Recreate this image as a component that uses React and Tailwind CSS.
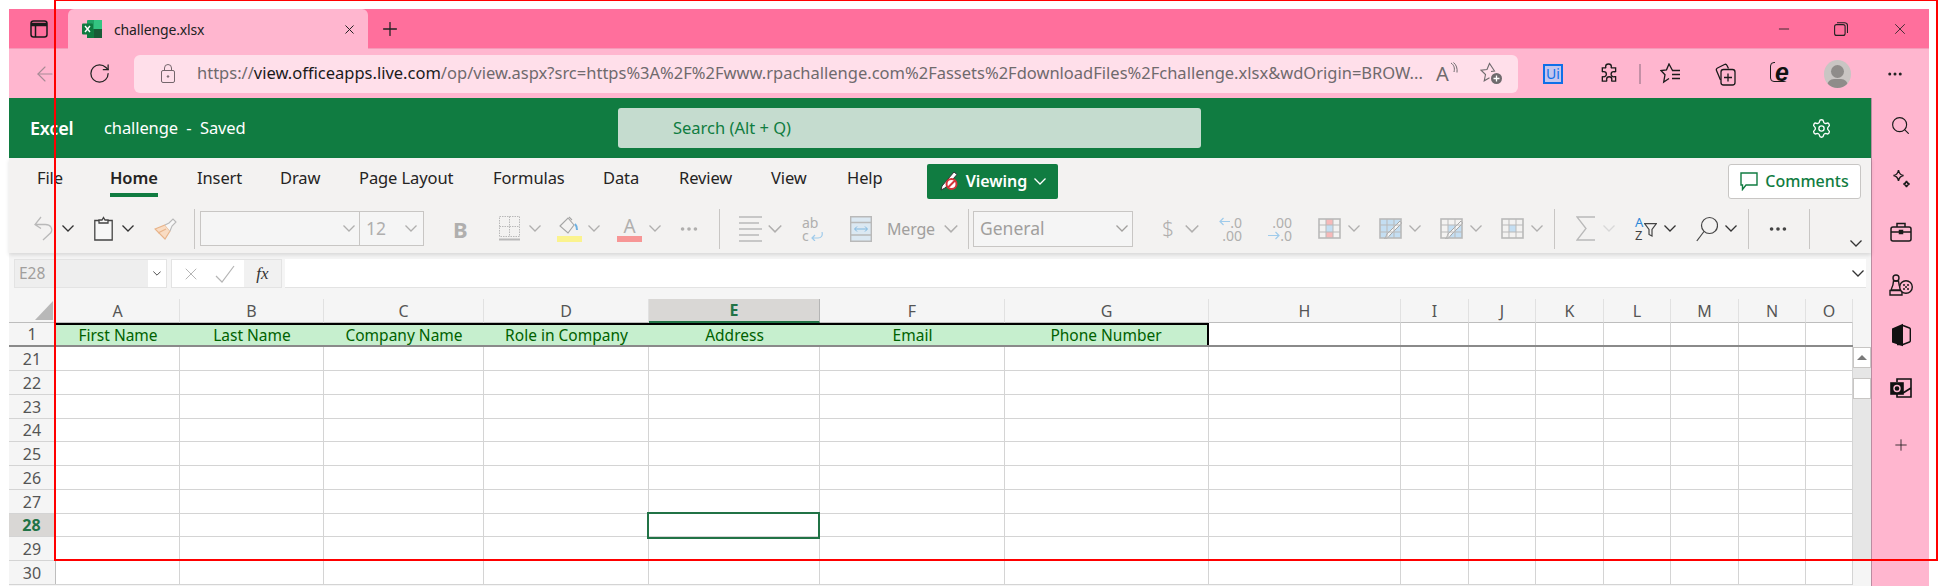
import { Search, Plus, X, Minus, ArrowLeft, RotateCw, Settings, MoreHorizontal } from "lucide-react";

const columns = ["A", "B", "C", "D", "E", "F", "G", "H", "I", "J", "K", "L", "M", "N", "O"];
const gridCols = "grid leading-[20px] grid-rows-[minmax(0,1fr)] grid-cols-[47px_124px_144px_160px_165px_171px_185px_204px_192px_68px_67px_68px_67px_68px_67px_47px]";
const titles = ["First Name", "Last Name", "Company Name", "Role in Company", "Address", "Email", "Phone Number"];
const rows = [
    ["21", "h-[24px]"],
    ["22", "h-[24px]"],
    ["23", "h-[24px]"],
    ["24", "h-[23px]"],
    ["25", "h-[24px]"],
    ["26", "h-[24px]"],
    ["27", "h-[24px]"],
    ["28", "h-[23px]"],
    ["29", "h-[24px]"],
    ["30", "h-[24px]"],
];
const tabs = [
    ["File", "w-[73px] ml-[28px]"],
    ["Home", "w-[87px]"],
    ["Insert", "w-[83px]"],
    ["Draw", "w-[79px]"],
    ["Page Layout", "w-[134px]"],
    ["Formulas", "w-[110px]"],
    ["Data", "w-[76px]"],
    ["Review", "w-[92px]"],
    ["View", "w-[76px]"],
    ["Help", "w-[80px]"],
];

function Chev({ c = "", size = "w-[12px] h-[7px]" }) {
    return (
        <svg viewBox="0 0 12 7" className={"shrink-0 " + size + " " + c} fill="none" stroke="currentColor" strokeWidth="1.3">
            <path d="M0.5 0.5 6 6l5.500-5.500" />
        </svg>
    );
}

function Sep({ c = "" }) {
    return <div className={"w-px h-[40px] bg-[#c8c6c4] shrink-0 " + c}></div>;
}

function GridIcon({ c = "", children }) {
    return (
        <svg viewBox="0 0 23 21" className={"w-[23px] h-[21px] shrink-0 " + c} fill="none" stroke="#b9b9b9">
            {children}
            <path d="M8 1v19M15 1v19M1 7h21M1 14h21" strokeWidth="1" />
            <rect x="1" y="1" width="21" height="19" strokeWidth="1.600" />
        </svg>
    );
}

export default function App() {
    return (
        <div className="relative w-[1938px] h-[586px] overflow-hidden bg-white pt-[9px] pl-[9px] font-['Noto_Sans',sans-serif]">
            {/* title bar */}
            <div className="flex items-start w-[1920px] h-[40px] bg-[#ff6f9c] border-b border-[#f59ab8]">
                <div className="w-[59px] h-[39px] flex items-center pl-[21px] shrink-0">
                    <svg viewBox="0 0 18 18" className="w-[18px] h-[18px]" fill="none" stroke="#1a1a1a" strokeWidth="1.5">
                        <rect x="1" y="1" width="16" height="16" rx="2.500" />
                        <path d="M1 4.500h16" strokeWidth="3.500" />
                        <path d="M5.500 5v12" />
                    </svg>
                </div>
                <div className="flex items-center w-[300px] h-[40px] bg-[#ffb6cf] rounded-t-[6px] pl-[14px] shrink-0">
                    <svg viewBox="0 0 20 18" className="w-[20px] h-[18px] shrink-0">
                        <rect x="5" y="0" width="15" height="18" rx="1" fill="#21a366" />
                        <rect x="12" y="0" width="8" height="9" fill="#33c481" />
                        <rect x="5" y="9" width="8" height="9" fill="#107c41" />
                        <rect x="12" y="9" width="8" height="9" fill="#185c37" />
                        <rect x="0" y="3.500" width="11" height="11" rx="1" fill="#0f7b40" />
                        <path d="M3 6l5 6M8 6l-5 6" stroke="#fff" strokeWidth="1.400" />
                    </svg>
                    <span className="ml-[12px] text-[14px] text-[#222] w-[228px] tracking-[-0.15px]">challenge.xlsx</span>
                    <X className="w-[15px] h-[15px] text-[#222] shrink-0" strokeWidth={1.6} />
                </div>
                <div className="h-[39px] flex items-center ml-[11px]">
                    <Plus className="w-[22px] h-[22px] text-[#222]" strokeWidth={1.4} />
                </div>
                <div className="flex items-center h-[39px] ml-auto pr-[20px]">
                    <Minus className="w-[16px] h-[16px] text-[#222]" strokeWidth={1.3} />
                    <svg viewBox="0 0 14 14" className="w-[14px] h-[14px] ml-[42px]" fill="none" stroke="#222" strokeWidth="1.100">
                        <rect x="0.600" y="2.600" width="10.500" height="10.800" rx="2" />
                        <path d="M3 .7h7.500a3 3 0 0 1 3 3V11" />
                    </svg>
                    <X className="w-[18px] h-[18px] ml-[43px] text-[#222]" strokeWidth={1.1} />
                </div>
            </div>

            {/* address bar */}
            <div className="flex items-center w-[1920px] h-[49px] bg-[#ffb6cf]">
                <ArrowLeft className="w-[24px] h-[24px] ml-[24px] text-[#a78a95] shrink-0" strokeWidth={1.1} />
                <RotateCw className="w-[23px] h-[23px] ml-[31px] text-[#222] shrink-0" strokeWidth={1.3} />
                <div className="flex items-center w-[1384px] h-[38px] ml-[23px] rounded-[6px] bg-[#ffdfea] shrink-0">
                    <svg viewBox="0 0 14 19" className="w-[14px] h-[19px] ml-[27px] shrink-0" fill="none" stroke="#75666c" strokeWidth="1">
                        <rect x="0.500" y="6.500" width="13" height="12" rx="1.500" />
                        <path d="M3.500 6.500V4a3.500 3.500 0 0 1 7 0v2.500" />
                        <circle cx="7" cy="12.500" r="0.800" fill="#75666c" />
                    </svg>
                    <p className="ml-[22px] w-[1230px] text-[16.500px] text-[#6f6a6d] whitespace-nowrap overflow-hidden shrink-0">
                        https://<span className="text-[#1a1a1a]">view.officeapps.live.com</span>/op/view.aspx?src=https%3A%2F%2Fwww.rpachallenge.com%2Fassets%2FdownloadFiles%2Fchallenge.xlsx&amp;wdOrigin=BROW...
                    </p>
                    <div className="relative ml-[9px] w-[20px] text-[#6f6a6d] text-[20px] leading-none shrink-0">
                        A
                        <svg viewBox="0 0 8 12" className="absolute -right-[2px] -top-[2px] w-[8px] h-[12px]" fill="none" stroke="#6f6a6d" strokeWidth="1">
                            <path d="M1 1c3 2 4 5 3 9M3.500.5c3 2.500 4 6 3.500 10" />
                        </svg>
                    </div>
                    <svg viewBox="0 0 23 23" className="w-[23px] h-[23px] ml-[24px] shrink-0" fill="none" stroke="#6f6a6d" strokeWidth="1.100">
                        <path d="M11 9.500l3.500-.5L9.500 1.500 7 7.500l-6 .7 4.500 4.300-1.300 6.300 5.300-3" />
                        <circle cx="16.500" cy="16.500" r="5.500" fill="#6f6a6d" stroke="none" />
                        <path d="M16.500 13.500v6M13.500 16.500h6" stroke="#fff" strokeWidth="1.300" />
                    </svg>
                </div>
                <div className="ml-[25px] w-[20px] h-[20px] flex items-center justify-center border-2 border-[#0f6fe8] bg-[#c3c6ee] text-[#0f6fe8] text-[14px] leading-none shrink-0">Ui</div>
                <svg viewBox="0 0 20 22" className="w-[19px] h-[21px] ml-[36px] shrink-0" fill="none" stroke="#1a1a1a" strokeWidth="1.400">
                    <path d="M7 3.500a3 2.500 0 0 1 6 0c0 1-.5 1 0 1.500h4.500v4c-.5.500-1 0-2 0a2.500 2.500 0 0 0 0 5.500c1 0 1.500-.5 2-.2V19h-4c-.5-.5 0-1 0-1.800a2.500 2.500 0 0 0-5.500 0c0 .8.500 1.300 0 1.800H3.500v-4.500c.5-.5 1 0 1.500 0a2.500 2.500 0 0 0 0-5.500c-.5 0-1 .5-1.500 0V5H7c.5-.5 0-.5 0-1.500z" />
                </svg>
                <div className="w-[2px] h-[20px] ml-[21px] bg-[#c490a6] shrink-0"></div>
                <svg viewBox="0 0 21 21" className="w-[21px] h-[21px] ml-[19px] shrink-0" fill="none" stroke="#1a1a1a" strokeWidth="1.300">
                    <path d="M12.500 7.500L9 1 6.500 6.800 1 7.500l4 4.200-1.300 7.300 5.300-3.500" />
                    <path d="M12 7.500h8M12 11.500h8M12 15.500h8" />
                </svg>
                <svg viewBox="0 0 21 24" className="w-[21px] h-[24px] ml-[34px] shrink-0" fill="none" stroke="#1a1a1a" strokeWidth="1.300">
                    <path d="M5.500 18L1.500 8.500c-.5-1.200 0-2 1-2.500l7-3.500c1-.5 2 0 2.500 1l1.500 3" />
                    <rect x="6" y="7.500" width="14" height="15.500" rx="2.500" />
                    <path d="M13 11.500v8M9 15.500h8" />
                </svg>
                <div className="relative w-[20px] h-[24px] ml-[34px] shrink-0">
                    <div className="absolute left-0 top-0 w-[18px] h-[20px] rounded-[4px] border border-[#1a1a1a]"></div>
                    <span className="absolute left-[5px] top-[-1px] bg-[#ffb6cf] font-['Liberation_Sans',sans-serif] font-bold italic text-[25px] leading-[23px] h-[20px] text-[#111]">e</span>
                </div>
                <div className="relative w-[27px] h-[28px] ml-[34px] rounded-full bg-[#c9c5c3] overflow-hidden shrink-0">
                    <div className="absolute left-[7px] top-[5px] w-[13px] h-[13px] rounded-full bg-[#8f8c8a]"></div>
                    <div className="absolute left-[3px] top-[19px] w-[21px] h-[14px] rounded-full bg-[#8f8c8a]"></div>
                </div>
                <MoreHorizontal className="w-[18px] h-[18px] ml-[35px] text-[#222] shrink-0" strokeWidth={2} />
            </div>

            <div className="flex w-[1920px] h-[488px]">
                <div className="flex flex-col w-[1862px] shrink-0 bg-[#f5f5f5]">
                    {/* app header */}
                    <div className="flex items-center h-[60px] shrink-0 bg-[#107c41] text-white">
                        <span className="ml-[21px] w-[74px] text-[18px] font-semibold tracking-[-0.2px]">Excel</span>
                        <span className="text-[16.500px] w-[514px] whitespace-pre tracking-[-0.1px]">challenge  -  Saved</span>
                        <div className="flex items-center w-[583px] h-[40px] rounded-[3px] bg-[#c5dccf] pl-[55px] text-[16.500px] text-[#107c41]">Search (Alt + Q)</div>
                        <Settings className="w-[21px] h-[21px] ml-[610px]" strokeWidth={1.5} />
                    </div>

                    {/* ribbon */}
                    <div className="h-[95px] shrink-0 bg-[#f3f2f1] shadow-[0_2px_4px_rgba(0,0,0,0.12)] z-10">
                        <div className="flex items-center h-[46px]">
                            {tabs.map(([label, width]) => (
                                <div key={label} className={"h-[46px] pb-[5px] flex items-center text-[16.500px] text-[#252423] tracking-[-0.1px] shrink-0 " + width}>
                                    <span className={label === "Home" ? "relative font-semibold" : ""}>
                                        {label}
                                        {label === "Home" && <span className="absolute left-0 right-0 top-[27px] h-[4px] bg-[#107c41]"></span>}
                                    </span>
                                </div>
                            ))}
                            <div className="flex items-center justify-center gap-[7px] w-[131px] h-[35px] rounded-[2px] bg-[#107c41] text-white text-[16px] font-semibold shrink-0">
                                <svg viewBox="0 0 20 20" className="w-[20px] h-[20px] shrink-0">
                                    <path d="M15 1l3 2.500L6 17l-4 2 1-4z" fill="#fff" stroke="#333" strokeWidth="1" />
                                    <circle cx="12.500" cy="13" r="5" fill="#fff" stroke="#d13438" strokeWidth="2" />
                                    <path d="M9 16.500l7-7" stroke="#d13438" strokeWidth="2" />
                                </svg>
                                Viewing
                                <Chev c="text-white" />
                            </div>
                            <div className="flex items-center justify-center gap-[7px] w-[133px] h-[35px] ml-[670px] rounded-[3px] bg-white border border-[#c8c6c4] text-[#107c41] text-[16px] font-medium shrink-0">
                                <svg viewBox="0 0 18 19" className="w-[18px] h-[19px]" fill="none" stroke="#107c41" strokeWidth="1.400">
                                    <path d="M1 1h16v12H6l-3.500 4.500V13H1z" />
                                </svg>
                                Comments
                            </div>
                        </div>

                        <div className="flex items-center h-[49px] text-[#b0afae]">
                            {/* undo, clipboard, painter */}
                            <svg viewBox="0 0 20 25" className="w-[20px] h-[25px] ml-[25px] shrink-0" fill="none" stroke="#b9b9b9" strokeWidth="1.300">
                                <path d="M7 1L1 8.500l6 4M1 8.500h10.500c5 0 7.500 4 5.500 8L9 24" />
                            </svg>
                            <Chev c="ml-[8px] text-[#333]" />
                            <svg viewBox="0 0 19 25" className="w-[19px] h-[25px] ml-[20px] shrink-0" fill="#f7f7f7" stroke="#444" strokeWidth="1.300">
                                <path d="M5 4.500H.8v19.500h17.400V4.500H14" />
                                <path d="M5 7V4h3L9.500 1.500 11 4h3v3z" />
                            </svg>
                            <Chev c="ml-[9px] text-[#333]" />
                            <svg viewBox="0 0 23 24" className="w-[23px] h-[24px] ml-[20px] shrink-0" fill="none" strokeWidth="1.100">
                                <path d="M1 12l10-4 5 6-5 8z" fill="#f9dcc3" stroke="#e8b48a" />
                                <path d="M4 16l8-4" stroke="#e8b48a" />
                                <path d="M11 8l4-2 4-4 3 3-4 4-2 5" stroke="#b9b9b9" fill="#f7f7f7" />
                            </svg>
                            <Sep c="ml-[17px]" />

                            {/* font */}
                            <div className="flex items-center justify-end w-[160px] h-[35px] ml-[5px] pr-[4px] bg-[#f5f5f5] border border-[#c8c6c4] shrink-0">
                                <Chev c="text-[#b0afae]" />
                            </div>
                            <div className="flex items-center justify-between w-[64px] h-[35px] px-[6px] bg-[#f5f5f5] border border-l-0 border-[#c8c6c4] text-[17.500px] shrink-0">
                                12
                                <Chev />
                            </div>
                            <span className="ml-[29px] w-[14px] text-[22px] leading-none font-bold shrink-0">B</span>
                            <svg viewBox="0 0 21 25" className="w-[21px] h-[25px] ml-[32px] shrink-0" fill="none" stroke="#b9b9b9" strokeWidth="1" strokeDasharray="1.500 1">
                                <path d="M.5.5h20v20H.5zM10.500.5v20M.5 10.500h20" />
                                <path d="M0 23.500h21" strokeWidth="2" strokeDasharray="none" />
                            </svg>
                            <Chev c="ml-[9px]" />
                            <div className="flex flex-col items-center w-[25px] ml-[16px] shrink-0">
                                <svg viewBox="0 0 25 20" className="w-[25px] h-[20px]" fill="none" strokeWidth="1.100">
                                    <path d="M3 10l8-8 6 7-6 8z" stroke="#a5a5a5" />
                                    <path d="M12 1l3 3" stroke="#a5a5a5" />
                                    <path d="M18 8c2 2 2 5 2 6" stroke="#6fb0e0" strokeWidth="2" />
                                </svg>
                                <div className="w-[25px] h-[6px] bg-[#fbf38e]"></div>
                            </div>
                            <Chev c="ml-[6px]" />
                            <div className="flex flex-col items-center w-[25px] ml-[17px] shrink-0">
                                <span className="text-[19px] leading-[20px]">A</span>
                                <div className="w-[25px] h-[6px] bg-[#f79696]"></div>
                            </div>
                            <Chev c="ml-[7px]" />
                            <MoreHorizontal className="w-[22px] h-[22px] ml-[17px] shrink-0" strokeWidth={2} />
                            <Sep c="ml-[19px]" />

                            {/* alignment */}
                            <svg viewBox="0 0 23 26" className="w-[23px] h-[26px] ml-[19px] shrink-0" stroke="#b9b9b9" strokeWidth="1.400">
                                <path d="M0 1h23M0 7h20M0 13h23M0 19h20M0 25h23" />
                            </svg>
                            <Chev c="ml-[6px]" size="w-[14px] h-[8px]" />
                            <div className="relative w-[21px] h-[26px] ml-[20px] text-[14px] leading-[13px] shrink-0">
                                <div>ab</div>
                                <div>c</div>
                                <svg viewBox="0 0 12 9" className="absolute right-0 bottom-[1px] w-[12px] h-[9px]" fill="none" stroke="#9fcbeb" strokeWidth="1.200">
                                    <path d="M11 0c1 4-1 6-4 6H1M4 3L1 6l3 3" />
                                </svg>
                            </div>
                            <svg viewBox="0 0 22 26" className="w-[22px] h-[26px] ml-[27px] shrink-0" fill="#dbe8f2" stroke="#b9b9b9" strokeWidth="1.400">
                                <path d="M.7.7h20.600v24.600H.7zM.7 6.500h20.600M.7 19h20.600" />
                                <path d="M5 13h12M7 10.500L4.500 13 7 15.500M15 10.500l2.500 2.500-2.500 2.500" fill="none" stroke="#7db7e0" strokeWidth="1" />
                            </svg>
                            <span className="ml-[15px] w-[49px] text-[16px] text-[#a19f9d] tracking-[-0.2px] shrink-0">Merge</span>
                            <Chev c="ml-[8px]" size="w-[14px] h-[8px]" />
                            <Sep c="ml-[10px]" />

                            {/* number */}
                            <div className="flex items-center justify-between w-[160px] h-[36px] ml-[4px] pl-[6px] pr-[4px] bg-[#f5f5f5] border border-[#c8c6c4] text-[17.500px] text-[#a19f9d] shrink-0">
                                General
                                <Chev />
                            </div>
                            <span className="ml-[29px] w-[11px] text-[21px] leading-none font-light shrink-0">$</span>
                            <Chev c="ml-[12px]" size="w-[14px] h-[8px]" />
                            <div className="relative w-[23px] h-[26px] ml-[20px] text-[14px] leading-[13px] text-right shrink-0">
                                <div>.0</div>
                                <div>.00</div>
                                <svg viewBox="0 0 11 9" className="absolute left-0 top-[1px] w-[11px] h-[9px]" fill="none" stroke="#9fcbeb" strokeWidth="1.200">
                                    <path d="M11 4.500H1M4.500 1L1 4.500 4.500 8" />
                                </svg>
                            </div>
                            <div className="relative w-[24px] h-[26px] ml-[26px] text-[14px] leading-[13px] text-right shrink-0">
                                <div>.00</div>
                                <div>.0</div>
                                <svg viewBox="0 0 12 9" className="absolute left-0 bottom-[2px] w-[12px] h-[9px]" fill="none" stroke="#9fcbeb" strokeWidth="1.200">
                                    <path d="M0 4.500h11M7.500 1L11 4.500 7.500 8" />
                                </svg>
                            </div>

                            {/* styles */}
                            <GridIcon c="ml-[26px]">
                                <rect x="8" y="1" width="7" height="6" fill="#f7b9b9" stroke="none" />
                                <rect x="8" y="7" width="7" height="7" fill="#c4def2" stroke="none" />
                                <rect x="8" y="14" width="7" height="6" fill="#f7b9b9" stroke="none" />
                            </GridIcon>
                            <Chev c="ml-[7px]" />
                            <GridIcon c="ml-[19px]">
                                <rect x="1" y="1" width="21" height="19" fill="#c4def2" stroke="none" />
                                <path d="M23 5L11 17c-1 2-3 4-6 4 2-1 2-3 3-5L21 3z" fill="#f5f5f5" stroke="#a5a5a5" />
                            </GridIcon>
                            <Chev c="ml-[7px]" />
                            <GridIcon c="ml-[19px]">
                                <rect x="8" y="7" width="14" height="13" fill="#c4def2" stroke="none" />
                                <path d="M23 5L11 17c-1 2-3 4-6 4 2-1 2-3 3-5L21 3z" fill="#f5f5f5" stroke="#a5a5a5" />
                            </GridIcon>
                            <Chev c="ml-[7px]" />
                            <GridIcon c="ml-[19px]">
                                <rect x="8" y="7" width="7" height="7" fill="#c4def2" stroke="none" />
                            </GridIcon>
                            <Chev c="ml-[7px]" />
                            <Sep c="ml-[11px]" />

                            {/* editing */}
                            <svg viewBox="0 0 19 25" className="w-[19px] h-[25px] ml-[21px] shrink-0" fill="none" stroke="#b9b9b9" strokeWidth="1.300">
                                <path d="M19 1H1l9 11.500L1 24h18" />
                            </svg>
                            <Chev c="ml-[8px] text-[#d8d8d8]" />
                            <div className="relative w-[22px] h-[26px] ml-[20px] text-[13px] leading-[13px] shrink-0">
                                <div className="text-[#2b88d8]">A</div>
                                <div className="text-[#444]">Z</div>
                                <svg viewBox="0 0 13 14" className="absolute right-0 top-[7px] w-[13px] h-[14px]" fill="none" stroke="#444" strokeWidth="1.200">
                                    <path d="M.6.6h11.800L8 6.500V13L5 11.500v-5z" />
                                </svg>
                            </div>
                            <Chev c="ml-[7px] text-[#333]" />
                            <svg viewBox="0 0 22 26" className="w-[22px] h-[26px] ml-[20px] shrink-0" fill="none" stroke="#444" strokeWidth="1.200">
                                <circle cx="13.500" cy="9.500" r="8" />
                                <path d="M8 15.500L.8 25" />
                            </svg>
                            <Chev c="ml-[7px] text-[#333]" />
                            <Sep c="ml-[11px]" />
                            <MoreHorizontal className="w-[22px] h-[22px] ml-[18px] text-[#444] shrink-0" strokeWidth={2} />
                            <Sep c="ml-[20px]" />
                            <Chev c="ml-[40px] mt-[30px] text-[#333]" />
                        </div>
                    </div>

                    {/* formula bar */}
                    <div className="flex items-center h-[29px] mt-[6px] shrink-0">
                        <div className="flex items-center w-[153px] h-[29px] ml-[5px] bg-[#eeeeee] border border-[#e3e3e3] shrink-0">
                            <span className="w-[133px] pl-[4px] text-[15.500px] text-[#a19f9d]">E28</span>
                            <div className="flex items-center justify-center w-[18px] h-[27px] bg-white">
                                <Chev c="text-[#333]" size="w-[8px] h-[5px]" />
                            </div>
                        </div>
                        <div className="flex items-center w-[111px] h-[29px] ml-[4px] bg-white border border-[#e3e3e3] shrink-0">
                            <X className="w-[20px] h-[20px] ml-[9px] text-[#b5b5b5]" strokeWidth={1.2} />
                            <svg viewBox="0 0 20 18" className="w-[20px] h-[18px] ml-[14px]" fill="none" stroke="#b5b5b5" strokeWidth="1.200">
                                <path d="M1 11l6 6L19 1" />
                            </svg>
                            <div className="w-[37px] h-[27px] ml-[9px] flex items-center justify-center bg-[#f1f1f1] font-['Liberation_Serif',serif] italic text-[17px] text-[#333]">fx</div>
                        </div>
                        <div className="flex items-center justify-end w-[1581px] h-[29px] ml-[3px] pr-[2px] bg-white border-b border-[#e3e3e3] shrink-0">
                            <Chev c="text-[#333]" />
                        </div>
                    </div>

                    {/* sheet */}
                    <div className="flex mt-[11px]">
                        <div className="w-[1844px] shrink-0">
                            <div className={gridCols + " h-[24px]"}>
                                <div className="relative border-b border-[#bdbdbd]">
                                    <svg viewBox="0 0 18 19" className="absolute right-[3px] bottom-[2px] w-[18px] h-[19px]">
                                        <path d="M18 0v19H0z" fill="#b8b8b8" />
                                    </svg>
                                </div>
                                {columns.map((col) =>
                                    col === "E" ? (
                                        <div key={col} className="flex items-center justify-center bg-[#d9d7d5] border-b-2 border-r border-b-[#217346] border-r-[#b5b5b5] text-[16px] font-bold text-[#217346]">{col}</div>
                                    ) : (
                                        <div key={col} className="flex items-center justify-center border-r border-b border-r-[#e1e1e1] border-b-[#bdbdbd] text-[16px] text-[#555]">{col}</div>
                                    )
                                )}
                            </div>
                            <div className={gridCols + " h-[24px] border-b-2 border-[#8a8a8a]"}>
                                <div className="flex items-center justify-center text-[16px] text-[#555] border-r border-[#bdbdbd]">1</div>
                                {columns.map((col, i) =>
                                    i < 7 ? (
                                        <div key={col} className={"flex items-center justify-center bg-[#c6efce] border-t-2 border-black text-[15.500px] text-[#006100] " + (i === 6 ? "border-r-2" : "")}>{titles[i]}</div>
                                    ) : (
                                        <div key={col} className="bg-white border-r border-[#d4d4d4]"></div>
                                    )
                                )}
                            </div>
                            {rows.map(([num, height]) => (
                                <div key={num} className={gridCols + " border-b border-[#d4d4d4] " + height}>
                                    {num === "28" ? (
                                        <div className="flex items-center justify-center bg-[#d9d7d5] border-r-2 border-[#217346] text-[16px] font-bold text-[#217346]">{num}</div>
                                    ) : (
                                        <div className="flex items-center justify-center text-[16px] text-[#555] border-r border-[#bdbdbd]">{num}</div>
                                    )}
                                    {columns.map((col) => (
                                        <div key={col} className="relative bg-white border-r border-[#d4d4d4]">
                                            {num === "28" && col === "E" && (
                                                <div className="absolute -left-[2px] -top-[2px] -right-[1px] -bottom-[3px] z-10 border-2 border-[#217346]"></div>
                                            )}
                                        </div>
                                    ))}
                                </div>
                            ))}
                        </div>
                        <div className="flex flex-col w-[18px] shrink-0">
                            <div className="h-[48px] shrink-0"></div>
                            <div className="h-[214px] bg-[#e6e6e6]">
                                <div className="flex items-center justify-center h-[21px] bg-white border border-[#c8c6c4]">
                                    <div className="w-0 h-0 border-x-[5px] border-b-[5px] border-x-transparent border-b-[#7a7a7a]"></div>
                                </div>
                                <div className="h-[21px] mt-[10px] bg-white border border-[#c8c6c4]"></div>
                            </div>
                        </div>
                    </div>
                </div>

                {/* edge sidebar */}
                <div className="flex flex-col items-center w-[58px] shrink-0 bg-[#ffb6cf] border-l border-[#b98da1] text-[#1a1a1a]">
                    <div className="h-[54px] flex items-center">
                        <Search className="w-[21px] h-[21px]" strokeWidth={1.3} />
                    </div>
                    <div className="h-[53px] flex items-center">
                        <svg viewBox="0 0 20 20" className="w-[20px] h-[20px]" fill="none" stroke="#1a1a1a" strokeWidth="1.400">
                            <path d="M7.500 1c.5 3 2 5 5 5.500-3 .5-4.500 2.500-5 5.500-.5-3-2-5-5-5.500 3-.5 4.500-2.500 5-5.500zM15.500 12c.3 1.500 1 2.500 3 3-2 .5-2.700 1.500-3 3-.3-1.500-1-2.500-3-3 2-.5 2.700-1.500 3-3z" />
                        </svg>
                    </div>
                    <div className="h-[53px] flex items-center">
                        <svg viewBox="0 0 22 20" className="w-[22px] h-[20px]" fill="none" stroke="#1a1a1a" strokeWidth="1.500">
                            <rect x="1" y="5" width="20" height="14" rx="2" />
                            <path d="M7 5V1.500h8V5M1 10h20" />
                            <rect x="9.500" y="8.500" width="3" height="3" fill="#1a1a1a" />
                        </svg>
                    </div>
                    <div className="h-[53px] flex items-center">
                        <svg viewBox="0 0 24 22" className="w-[24px] h-[22px]" fill="none" stroke="#1a1a1a" strokeWidth="1.400">
                            <circle cx="7" cy="4" r="3" />
                            <path d="M4.500 7h5c0 3 1 6 3 9H2c1.500-3 2.500-6 2.500-9zM1 21v-4.500h12V21z" />
                            <circle cx="17" cy="13" r="6.300" fill="#ffb6cf" />
                            <circle cx="15" cy="11" r="1" fill="#1a1a1a" stroke="none" />
                            <circle cx="19" cy="11" r="1" fill="#1a1a1a" stroke="none" />
                            <circle cx="15" cy="15" r="1" fill="#1a1a1a" stroke="none" />
                            <circle cx="19" cy="15" r="1" fill="#1a1a1a" stroke="none" />
                            <circle cx="17" cy="13" r="1" fill="#1a1a1a" stroke="none" />
                        </svg>
                    </div>
                    <div className="h-[48px] flex items-center">
                        <svg viewBox="0 0 20 24" className="w-[20px] h-[24px]">
                            <path d="M1 5.500L12 .8v22.400L1 19.500z" fill="#111" />
                            <path d="M12 2.500l6.500 2.500q.8.300.8 1.200v11.600q0 .9-.8 1.200L12 21.500H6" fill="none" stroke="#111" strokeWidth="1.400" />
                        </svg>
                    </div>
                    <div className="h-[58px] flex items-center">
                        <svg viewBox="0 0 22 21" className="w-[22px] h-[21px]" fill="none" stroke="#111" strokeWidth="1.600">
                            <path d="M7 4V1h14v18H7v-3M21 10l-8 5" />
                            <rect x="1" y="5" width="12" height="11" fill="#111" />
                            <circle cx="7" cy="10.500" r="3" stroke="#ffb6cf" strokeWidth="1.400" />
                        </svg>
                    </div>
                    <div className="h-[56px] flex items-center">
                        <Plus className="w-[18px] h-[18px]" strokeWidth={1.1} />
                    </div>
                </div>
            </div>

            {/* red selection outline drawn over the capture */}
            <div className="absolute left-[54px] -top-px w-[1884px] h-[562px] border-2 border-[#ff0000] pointer-events-none z-20"></div>
        </div>
    );
}
